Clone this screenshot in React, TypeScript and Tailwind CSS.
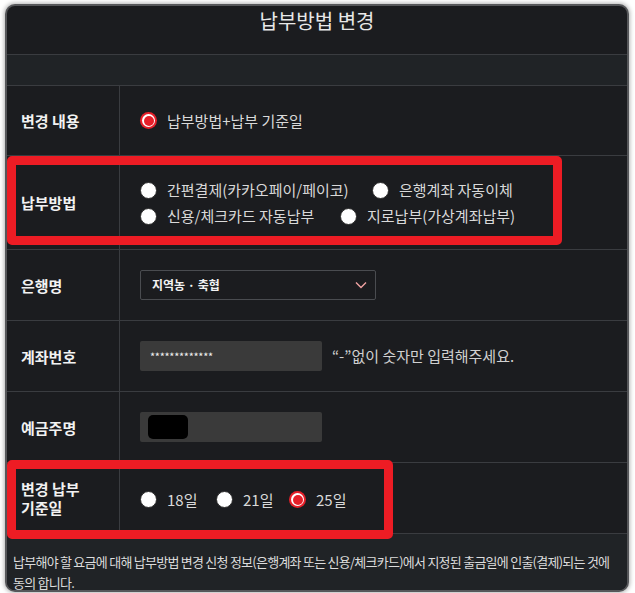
import React from "react";

/** 라디오 버튼 (선택 시 빨간 원) */
function Radio({ checked = false }: { checked?: boolean }) {
  if (checked) {
    return (
      <span className="flex h-[17px] w-[17px] shrink-0 items-center justify-center rounded-full bg-[#e51f29]">
        <span className="flex h-[13px] w-[13px] items-center justify-center rounded-full bg-white">
          <span className="h-[10px] w-[10px] rounded-full bg-[#e51f29]" />
        </span>
      </span>
    );
  }
  return <span className="h-[17px] w-[17px] shrink-0 rounded-full border border-[#2a2a2a] bg-white" />;
}

function Option({ label, checked = false, className = "" }: { label: string; checked?: boolean; className?: string }) {
  return (
    <label className={`flex items-center gap-[10px] ${className}`}>
      <Radio checked={checked} />
      <span className="text-[15px] leading-[20px] text-[#d9d9d9]">{label}</span>
    </label>
  );
}

function Row({ label, height, children }: { label: React.ReactNode; height: string; children: React.ReactNode }) {
  return (
    <div className={`flex shrink-0 border-b border-[#3a3c40] ${height}`}>
      <div className="flex w-[113px] shrink-0 items-center border-r border-[#3a3c40] pl-[14px] text-[15px] font-bold leading-[19px] text-[#f2f2f2]">
        {label}
      </div>
      <div className="flex flex-1 items-center pl-[20px]">{children}</div>
    </div>
  );
}

export default function App() {
  return (
    <div
      className="relative h-[593px] w-[635px] overflow-hidden bg-white"
      style={{ fontFamily: '"Noto Sans CJK KR", "Noto Sans", sans-serif' }}
    >
      <div className="relative ml-[7px] mt-[6px] flex h-[584px] w-[620px] flex-col overflow-hidden rounded-[8px] bg-[#1b1c1f] shadow-[0_0_0_2px_#56575a,0_0_4px_3px_rgba(0,0,0,0.3)]">
        {/* 제목 */}
        <div className="h-[49px] shrink-0 border-b border-[#3a3c40] pt-[3px] text-center text-[20px] leading-[24px] text-[#e8e8e8]">
          납부방법 변경
        </div>
        <div className="h-[31px] shrink-0 border-b border-[#3a3c40] bg-[#202326]" />

        <Row label="변경 내용" height="h-[70px]">
          <Option label="납부방법+납부 기준일" checked />
        </Row>

        <Row label="납부방법" height="h-[94px]">
          <div className="flex flex-col gap-[6px] pt-[1px]">
            <div className="flex items-center">
              <Option label="간편결제(카카오페이/페이코)" className="w-[232px]" />
              <Option label="은행계좌 자동이체" />
            </div>
            <div className="flex items-center">
              <Option label="신용/체크카드 자동납부" className="w-[200px]" />
              <Option label="지로납부(가상계좌납부)" />
            </div>
          </div>
        </Row>

        <Row label="은행명" height="h-[71px]">
          <div className="flex h-[30px] w-[236px] items-center justify-between rounded-[2px] border border-[#4a4c50] pl-[11px] pr-[8px]">
            <span className="text-[12px] font-bold text-[#f2f2f2]">지역농 · 축협</span>
            <svg width="12" height="8" viewBox="0 0 12 8" fill="none" stroke="#f0a3a3" strokeWidth="1.4">
              <path d="M1 1.5 L6 6.5 L11 1.5" />
            </svg>
          </div>
        </Row>

        <Row label="계좌번호" height="h-[71px]">
          <div className="flex h-[30px] w-[182px] items-center rounded-[2px] bg-[#3a3a3a] pl-[10px] text-[11px] tracking-[-0.3px] text-[#f0f0f0]">
            *************
          </div>
          <span className="ml-[10px] text-[15px] text-[#d0d0d0]">“-”없이 숫자만 입력해주세요.</span>
        </Row>

        <Row label="예금주명" height="h-[71px]">
          <div className="flex h-[30px] w-[182px] items-center rounded-[2px] bg-[#3a3a3a] pl-[8px]">
            <div className="h-[24px] w-[40px] rounded-[5px] bg-black" />
          </div>
        </Row>

        <Row
          label={
            <span>
              변경 납부
              <br />
              기준일
            </span>
          }
          height="h-[71px]"
        >
          <div className="flex items-center pt-[3px]">
            <Option label="18일" className="w-[76px]" />
            <Option label="21일" className="w-[73px]" />
            <Option label="25일" checked />
          </div>
        </Row>

        {/* 안내 문구 */}
        <div className="min-h-0 flex-1 overflow-hidden bg-[#202326] px-[6px] pt-[17px] text-[13px] leading-[21px] tracking-[-0.75px] whitespace-nowrap text-[#dcdcdc]">
          납부해야 할 요금에 대해 납부방법 변경 신청 정보(은행계좌 또는 신용/체크카드)에서 지정된 출금일에 인출(결제)되는 것에
          <br />
          동의 합니다.
        </div>

        {/* 강조 박스 */}
        <div className="absolute left-0 top-[150px] h-[89px] w-[555px] rounded-[5px] border-[9px] border-[#ed1c24]" />
        <div className="absolute left-0 top-[454px] h-[79px] w-[386px] rounded-[5px] border-[9px] border-[#ed1c24]" />
      </div>
    </div>
  );
}
